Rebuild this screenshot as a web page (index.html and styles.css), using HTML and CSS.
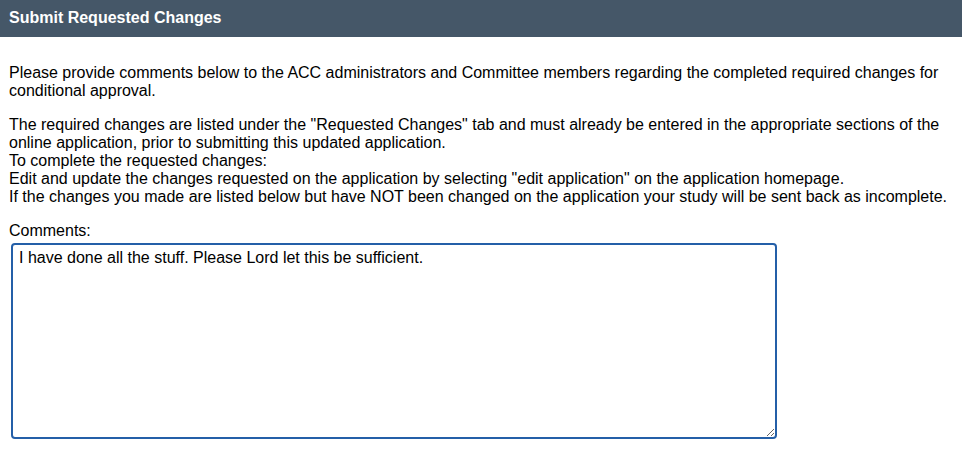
FILE: index.html
```html
<!DOCTYPE html>
<html>
	<head>
		<title>Submit Requested Changes</title>
		<link rel="stylesheet" href="styles.css">
	</head>
	<body>
		<div class="header">Submit Requested Changes</div>
		<div class="content">
			<p>Please provide comments below to the ACC administrators and Committee members regarding the completed required changes for conditional approval.</p>
			<p>The required changes are listed under the "Requested Changes" tab and must already be entered in the appropriate sections of the online application, prior to submitting this updated application.<br />
			To complete the requested changes:<br />
			Edit and update the changes requested on the application by selecting "edit application" on the application homepage.<br />
			If the changes you made are listed below but have NOT been changed on the application your study will be sent back as incomplete.</p>
			<label for="comments" class="label">Comments:</label>
			<textarea id="comments" class="comments">I have done all the stuff. Please Lord let this be sufficient.</textarea>
		</div>
	</body>
</html>
```

FILE: styles.css
```css
body {
	margin: 0;
	font-family: "Liberation Sans", Arial, sans-serif;
	font-size: 16px;
	line-height: 18px;
	color: #000;
	background: #fff;
}

.header {
	background-color: #455768;
	color: #fff;
	font-weight: bold;
	height: 37px;
	line-height: 36px;
	padding-left: 9px;
}

.content {
	padding: 11px 9px 0 9px;
}

.content p {
	margin: 16px 0;
}

.label {
	display: block;
}

.comments {
	display: block;
	box-sizing: border-box;
	width: 766px;
	height: 196px;
	margin: 3px 0 0 2px;
	padding: 4px 6px;
	border: 2px solid #245fa8;
	border-radius: 4px;
	font-family: "Liberation Sans", Arial, sans-serif;
	font-size: 16px;
	line-height: 18px;
	color: #000;
	outline: none;
	resize: both;
}
```
